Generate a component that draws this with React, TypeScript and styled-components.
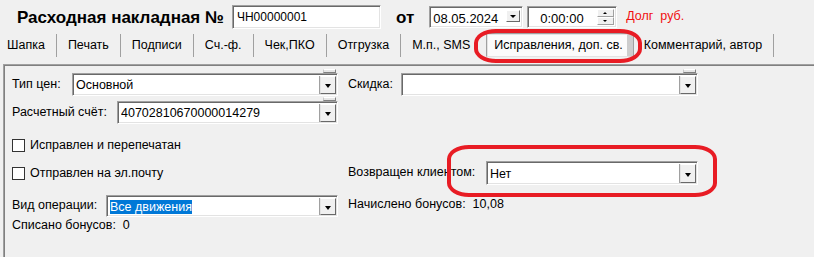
import styled, { createGlobalStyle } from 'styled-components';

const GlobalStyle = createGlobalStyle`
    html, body {
        margin: 0;
        padding: 0;
        background: #f0f0f0;
    }

    body {
        font-family: "Liberation Sans", Arial, sans-serif;
        font-size: 12.5px;
        color: #000;
    }
`;

type ComboProps = {
    width: number;
    value?: string;
    selected?: boolean;
    tab?: boolean;
};

function Combo({ width, value, selected, tab }: ComboProps) {
    return (
        <ComboBox $w={width} $tab={tab}>
            <ComboText>{selected ? <Selection>{value}</Selection> : value}</ComboText>
            <DropButton />
        </ComboBox>
    );
}

function CheckField({ label }: { label: string }) {
    return (
        <CheckRow>
            <CheckBox />
            <span>{label}</span>
        </CheckRow>
    );
}

export default function App() {
    return (
        <Screen>
            <GlobalStyle />

            <Header>
                <Title>Расходная накладная №</Title>
                <NumberField>ЧН00000001</NumberField>
                <Title $ml={15}>от</Title>
                <DateField $w={94} $ml={15}>
                    08.05.2024
                    <SmallDrop />
                </DateField>
                <DateField $w={90} $ml={4} $center>
                    0:00:00
                    <Spin>
                        <SpinPart $up />
                        <SpinPart />
                    </Spin>
                </DateField>
                <Debt>Долг  руб.</Debt>
            </Header>

            <TabBar>
                <Tab $sep>Шапка</Tab>
                <Tab $sep>Печать</Tab>
                <Tab $sep>Подписи</Tab>
                <Tab $sep>Сч.-ф.</Tab>
                <Tab $sep>Чек,ПКО</Tab>
                <Tab $sep>Отгрузка</Tab>
                <Tab $pr={15}>М.п., SMS</Tab>
                <ActiveTab>Исправления, доп. св.</ActiveTab>
                <Tab $sep>Комментарий, автор</Tab>
            </TabBar>

            <Panel>
                <Row $h={23}>
                    <LeftCell>
                        <Label>Тип цен:</Label>
                        <Combo width={266} value="Основной" tab />
                    </LeftCell>
                    <RightCell>
                        <Label>Скидка:</Label>
                        <Combo width={297} tab />
                    </RightCell>
                </Row>

                <Row $h={23} $mt={5}>
                    <LeftCell>
                        <Label>Расчетный счёт:</Label>
                        <Combo width={221} value="40702810670000014279" tab />
                    </LeftCell>
                </Row>

                <Row $h={24} $mt={9}>
                    <LeftCell>
                        <CheckField label="Исправлен и перепечатан" />
                    </LeftCell>
                </Row>

                <Row $h={24} $mt={4}>
                    <LeftCell>
                        <CheckField label="Отправлен на эл.почту" />
                    </LeftCell>
                    <RightCell>
                        <Label>Возвращен клиентом:</Label>
                        <Combo width={212} value="Нет" />
                    </RightCell>
                </Row>

                <Row $h={22} $mt={10}>
                    <LeftCell>
                        <Label>Вид операции:</Label>
                        <Combo width={232} value="Все движения" selected />
                    </LeftCell>
                    <RightCell $top>
                        <Label>Начислено бонусов:&nbsp;&nbsp;10,08</Label>
                    </RightCell>
                </Row>

                <Row $h={18}>
                    <LeftCell>
                        <Label>Списано бонусов:&nbsp;&nbsp;0</Label>
                    </LeftCell>
                </Row>
            </Panel>

            <Mark $x={474} $y={29} $w={168} $h={34} />
            <Mark $x={447} $y={145} $w={270} $h={52} />
        </Screen>
    );
}

const Screen = styled.div`
    position: relative;
    width: 814px;
    height: 257px;
    overflow: hidden;
    background: #f0f0f0;
`;

const Header = styled.div`
    display: flex;
    align-items: center;
    height: 33px;
    padding-left: 17px;
    box-sizing: border-box;
`;

const Title = styled.div<{ $ml?: number }>`
    font-size: 17px;
    font-weight: bold;
    white-space: nowrap;
    margin-left: ${({ $ml }) => $ml ?? 0}px;
    padding-top: 2px;
`;

const sunken = `
    box-sizing: border-box;
    background: #fff;
    border: 1px solid;
    border-color: #a0a0a0 #ffffff #ffffff #a0a0a0;
    box-shadow: inset 1px 1px 0 #696969, inset -1px -1px 0 #e3e3e3;
`;

const NumberField = styled.div`
    ${sunken}
    display: flex;
    align-items: center;
    width: 149px;
    height: 24px;
    margin-left: 8px;
    padding-left: 4px;
    font-size: 12px;
`;

const DateField = styled.div<{ $w: number; $ml: number; $center?: boolean }>`
    ${sunken}
    position: relative;
    display: flex;
    align-items: center;
    width: ${({ $w }) => $w}px;
    height: 22px;
    margin-left: ${({ $ml }) => $ml}px;
    padding-left: ${({ $center }) => ($center ? 12 : 3)}px;
    padding-top: 3px;
    font-size: 13px;
`;

const SmallDrop = styled.div`
    position: absolute;
    right: 2px;
    top: 3px;
    width: 14px;
    height: 12px;
    box-sizing: border-box;
    background: #f0f0f0;
    border: 1px solid;
    border-color: #ffffff #696969 #696969 #ffffff;

    &::after {
        content: '';
        position: absolute;
        left: 3px;
        top: 4px;
        border-left: 3px solid transparent;
        border-right: 3px solid transparent;
        border-top: 3px solid #000;
    }
`;

const Spin = styled.div`
    position: absolute;
    right: 2px;
    top: 2px;
    width: 17px;
    display: flex;
    flex-direction: column;
`;

const SpinPart = styled.div<{ $up?: boolean }>`
    position: relative;
    height: 8px;
    box-sizing: border-box;
    background: #f0f0f0;
    border: 1px solid;
    border-color: #ffffff #a0a0a0 #a0a0a0 #ffffff;

    &::after {
        content: '';
        position: absolute;
        left: 5px;
        top: 2px;
        border-left: 2px solid transparent;
        border-right: 2px solid transparent;
        ${({ $up }) => ($up ? 'border-bottom: 2px solid #000;' : 'border-top: 2px solid #000;')}
    }
`;

const Debt = styled.div`
    margin-left: 9px;
    padding-bottom: 2px;
    font-size: 12.5px;
    color: #f01010;
    white-space: pre;
`;

const TabBar = styled.div`
    display: flex;
    align-items: center;
    height: 24px;
    margin-left: -4px;
    font-size: 12.5px;
`;

const Tab = styled.div<{ $sep?: boolean; $pr?: number }>`
    flex-shrink: 0;
    display: flex;
    align-items: center;
    height: 23px;
    padding: 0 ${({ $pr }) => $pr ?? 11}px 0 11px;
    border-right: 1px solid ${({ $sep }) => ($sep ? '#a0a0a0' : 'transparent')};
    white-space: nowrap;
`;

const ActiveTab = styled.div`
    flex-shrink: 0;
    display: flex;
    align-items: center;
    box-sizing: border-box;
    height: 24px;
    padding: 0 4px 0 7px;
    background: #fbfbfb;
    border: 1px solid;
    border-color: #a0a0a0 #a0a0a0 #e3e3e3 #a0a0a0;
    border-right: 6px solid #cdcdcd;
    box-shadow: inset 1px 1px 0 #e3e3e3, 1px 0 0 #a0a0a0;
    white-space: nowrap;
`;

const Panel = styled.div`
    height: 193px;
    margin: 7px 0 0 3px;
    padding: 8px 0 0 8px;
    box-sizing: border-box;
    border-top: 1px solid #a0a0a0;
    border-left: 1px solid #a0a0a0;
    box-shadow: inset 1px 1px 0 #808080;
`;

const Row = styled.div<{ $h: number; $mt?: number }>`
    display: flex;
    height: ${({ $h }) => $h}px;
    margin-top: ${({ $mt }) => $mt ?? 0}px;
`;

const LeftCell = styled.div`
    display: flex;
    align-items: center;
    justify-content: space-between;
    width: 336px;
    padding-right: 10px;
    box-sizing: border-box;
`;

const RightCell = styled.div<{ $top?: boolean }>`
    display: flex;
    align-items: ${({ $top }) => ($top ? 'flex-start' : 'center')};
    justify-content: space-between;
    width: 350px;
    padding-top: ${({ $top }) => ($top ? 2 : 0)}px;
`;

const Label = styled.span`
    white-space: nowrap;
    padding-bottom: 2px;
`;

const ComboBox = styled.div<{ $w: number; $tab?: boolean }>`
    ${sunken}
    position: relative;
    display: flex;
    align-items: center;
    width: ${({ $w }) => $w}px;
    height: 100%;
    padding: 2px 1px 1px 3px;

    &::before {
        content: ${({ $tab }) => ($tab ? "''" : 'none')};
        position: absolute;
        right: 1px;
        top: -5px;
        width: 13px;
        height: 4px;
        box-sizing: border-box;
        background: #e6e6e6;
        border-top: 1px solid #ffffff;
        border-bottom: 1px solid #808080;
        border-left: 1px solid #c8c8c8;
        border-right: 1px solid #808080;
    }
`;

const ComboText = styled.div`
    flex: 1;
    font-size: 12.5px;
    white-space: nowrap;
    overflow: hidden;
`;

const Selection = styled.span`
    background: #0078d7;
    color: #fff;
`;

const DropButton = styled.div`
    position: relative;
    width: 16px;
    height: 100%;
    box-sizing: border-box;
    background: #f0f0f0;
    border: 1px solid;
    border-color: #ffffff #696969 #696969 #e3e3e3;
    box-shadow: -1px 0 0 #a0a0a0;

    &::after {
        content: '';
        position: absolute;
        left: 4px;
        top: 50%;
        margin-top: -1px;
        border-left: 3.5px solid transparent;
        border-right: 3.5px solid transparent;
        border-top: 4px solid #000;
    }
`;

const CheckRow = styled.label`
    display: flex;
    align-items: center;
    gap: 5px;
    white-space: nowrap;
`;

const CheckBox = styled.span`
    width: 13px;
    height: 13px;
    box-sizing: border-box;
    background: #fff;
    border: 1px solid #333;
`;

const Mark = styled.div<{ $x: number; $y: number; $w: number; $h: number }>`
    position: absolute;
    left: ${({ $x }) => $x}px;
    top: ${({ $y }) => $y}px;
    width: ${({ $w }) => $w}px;
    height: ${({ $h }) => $h}px;
    box-sizing: border-box;
    border: 4px solid #e81c24;
    border-radius: 22px / 14px;
    pointer-events: none;
`;
